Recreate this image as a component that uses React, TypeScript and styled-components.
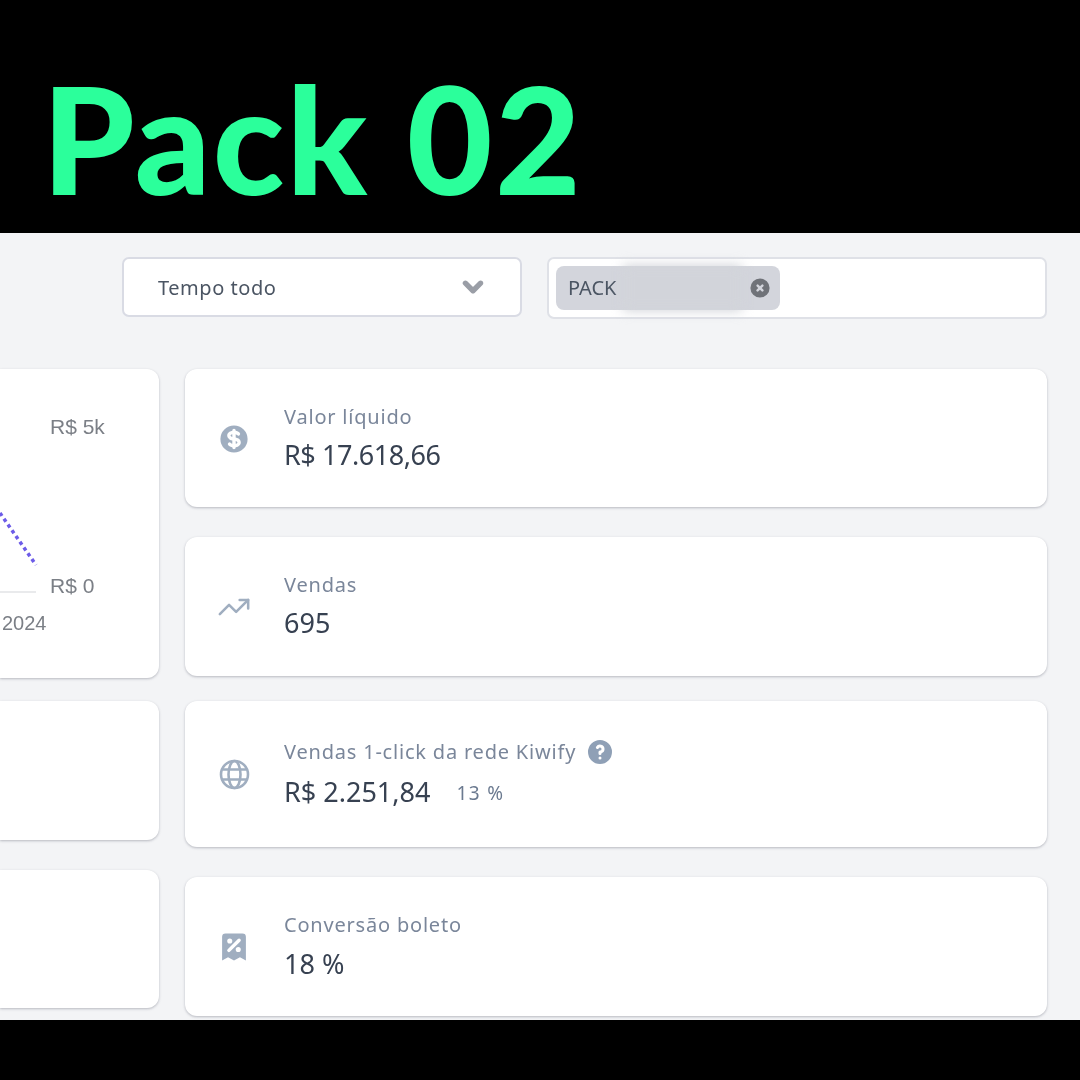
import React from "react";
import styled, { createGlobalStyle } from "styled-components";
import { HiChevronDown, HiCurrencyDollar, HiQuestionMarkCircle, HiReceiptTax, HiXCircle } from "react-icons/hi";
import { TrendingUp } from "lucide-react";

const Global = createGlobalStyle`
  html, body { margin: 0; padding: 0; background: #000; }
  body { font-family: "Noto Sans", "Open Sans", sans-serif; }
`;

const Page = styled.div`
  width: 1080px;
  height: 1080px;
  display: flex;
  flex-direction: column;
  background: #000;
  overflow: hidden;
`;

const Banner = styled.header`
  height: 233px;
  flex: none;
  box-sizing: border-box;
  padding: 50px 0 0 42px;
`;

const Title = styled.h1`
  margin: 0;
  font-family: "Lato", sans-serif;
  font-weight: 900;
  font-size: 148px;
  line-height: 176px;
  letter-spacing: 2.2px;
  color: #2bff9b;
  white-space: nowrap;
`;

const Dashboard = styled.main`
  height: 787px;
  flex: none;
  box-sizing: border-box;
  background: #f3f4f6;
  padding: 24px 33px 0 0;
  display: flex;
  flex-direction: column;
  filter: blur(0.6px);
  overflow: hidden;
`;

const Filters = styled.div`
  display: flex;
  align-items: flex-start;
  gap: 25px;
  padding-left: 122px;
  margin-bottom: 50px;
`;

const Select = styled.div`
  width: 400px;
  height: 60px;
  box-sizing: border-box;
  background: #fff;
  border: 2px solid #d9dbe4;
  border-radius: 7px;
  padding: 0 34px;
  display: flex;
  align-items: center;
  justify-content: space-between;
  font-size: 20px;
  letter-spacing: 0.55px;
  color: #4b5563;
  svg { width: 38px; height: 38px; color: #9a9ea6; margin-right: -6px; stroke: currentColor; stroke-width: 0.8px; }
`;

const TagInput = styled.div`
  width: 500px;
  height: 62px;
  box-sizing: border-box;
  background: #fff;
  border: 2px solid #dfe1e7;
  border-radius: 7px;
  padding: 7px;
  display: flex;
  align-items: flex-start;
`;

const Tag = styled.div`
  width: 224px;
  height: 44px;
  box-sizing: border-box;
  background: #d3d5dc;
  border-radius: 8px;
  padding: 0 8px 2px 12px;
  display: flex;
  align-items: center;
  font-size: 20px;
  color: #4b5563;
  svg { width: 24px; height: 24px; color: #6f7278; margin-top: 2px; }
`;

const BlurredValue = styled.div`
  flex: 1;
  height: 46px;
  margin: 2px 6px 0 6px;
  background: #d2d4da;
  filter: blur(6px);
`;

const Columns = styled.div`
  display: grid;
  grid-template-columns: 159px 862px;
  column-gap: 26px;
  align-items: start;
`;

const LeftColumn = styled.div`
  display: flex;
  flex-direction: column;
`;

const RightColumn = styled.div`
  display: flex;
  flex-direction: column;
`;

const Card = styled.section<{ $h: number; $after: number }>`
  height: ${p => p.$h}px;
  margin-bottom: ${p => p.$after}px;
  background: #fff;
  border-radius: 12px;
  box-shadow: 0 1px 3px rgba(60, 64, 80, 0.22), 0 1px 2px rgba(60, 64, 80, 0.12);
`;

const LeftCard = styled(Card)`
  border-radius: 0 12px 12px 0;
`;

const ChartSvg = styled.svg`
  display: block;
  font-family: "Liberation Sans", Arial, sans-serif;
  font-size: 21px;
  fill: #7b7f86;
`;

const Stat = styled(Card)`
  box-sizing: border-box;
  padding: 0 0 2px 32px;
  display: flex;
  align-items: center;
  gap: 33px;
`;

const IconSlot = styled.div`
  width: 34px;
  height: 34px;
  flex: none;
  margin-top: 3px;
  color: #a0aec0;
  display: flex;
  align-items: center;
  justify-content: center;
  svg { display: block; }
`;

const StatText = styled.div<{ $gap: number }>`
  display: flex;
  flex-direction: column;
  gap: ${p => p.$gap}px;
`;

const Label = styled.div`
  display: flex;
  align-items: center;
  gap: 9px;
  font-size: 20px;
  line-height: 30px;
  letter-spacing: 0.8px;
  color: #7a869a;
  svg { width: 30px; height: 30px; color: #8fa0b6; }
`;

const ValueRow = styled.div`
  display: flex;
  align-items: baseline;
  gap: 26px;
`;

const Value = styled.div<{ $tight?: boolean }>`
  font-size: 27px;
  line-height: 36px;
  letter-spacing: ${p => (p.$tight ? "-0.45px" : "0")};
  color: #374151;
`;

const Note = styled.span`
  font-size: 19px;
  letter-spacing: 1.4px;
  color: #6b7a90;
  position: relative;
  top: -2px;
`;

const Footer = styled.footer`
  flex: 1;
  background: #000;
`;

const GlobeIcon = () => (
  <svg width="31" height="31" viewBox="0 0 31 31" fill="none" stroke="currentColor" strokeWidth="2.6">
    <circle cx="15.5" cy="15.5" r="13.5" />
    <ellipse cx="15.5" cy="15.5" rx="6" ry="13.5" />
    <path d="M3.5 10.5h24M3.5 20.5h24" />
  </svg>
);

export default function App() {
  return (
    <Page>
      <Global />
      <Banner>
        <Title>Pack 02</Title>
      </Banner>
      <Dashboard>
        <Filters>
          <Select>
            <span>Tempo todo</span>
            <HiChevronDown />
          </Select>
          <TagInput>
            <Tag>
              <span>PACK</span>
              <BlurredValue />
              <HiXCircle />
            </Tag>
          </TagInput>
        </Filters>
        <Columns>
          <LeftColumn>
            <LeftCard $h={309} $after={23}>
              <ChartSvg width="159" height="309" viewBox="0 0 159 309">
                <text x="50" y="65">R$ 5k</text>
                <text x="50" y="224">R$ 0</text>
                <text x="2" y="261" fontSize="20">2024</text>
                <line x1="0" y1="223" x2="36" y2="223" stroke="#e9eaec" strokeWidth="2" />
                <line x1="0" y1="144" x2="36" y2="196" stroke="#6d5ce8" strokeWidth="3.5" strokeDasharray="3.5 3.5" />
              </ChartSvg>
            </LeftCard>
            <LeftCard $h={139} $after={30} />
            <LeftCard $h={138} $after={0} />
          </LeftColumn>
          <RightColumn>
            <Stat $h={138} $after={30}>
              <IconSlot><HiCurrencyDollar size={38} /></IconSlot>
              <StatText $gap={5}>
                <Label>Valor líquido</Label>
                <Value $tight>R$ 17.618,66</Value>
              </StatText>
            </Stat>
            <Stat $h={139} $after={25}>
              <IconSlot><TrendingUp size={34} strokeWidth={1.8} /></IconSlot>
              <StatText $gap={5}>
                <Label>Vendas</Label>
                <Value>695</Value>
              </StatText>
            </Stat>
            <Stat $h={146} $after={30}>
              <IconSlot><GlobeIcon /></IconSlot>
              <StatText $gap={7}>
                <Label>Vendas 1-click da rede Kiwify <HiQuestionMarkCircle /></Label>
                <ValueRow>
                  <Value>R$ 2.251,84</Value>
                  <Note>13 %</Note>
                </ValueRow>
              </StatText>
            </Stat>
            <Stat $h={139} $after={0}>
              <IconSlot><HiReceiptTax size={36} /></IconSlot>
              <StatText $gap={6}>
                <Label>Conversão boleto</Label>
                <Value>18 %</Value>
              </StatText>
            </Stat>
          </RightColumn>
        </Columns>
      </Dashboard>
      <Footer />
    </Page>
  );
}
